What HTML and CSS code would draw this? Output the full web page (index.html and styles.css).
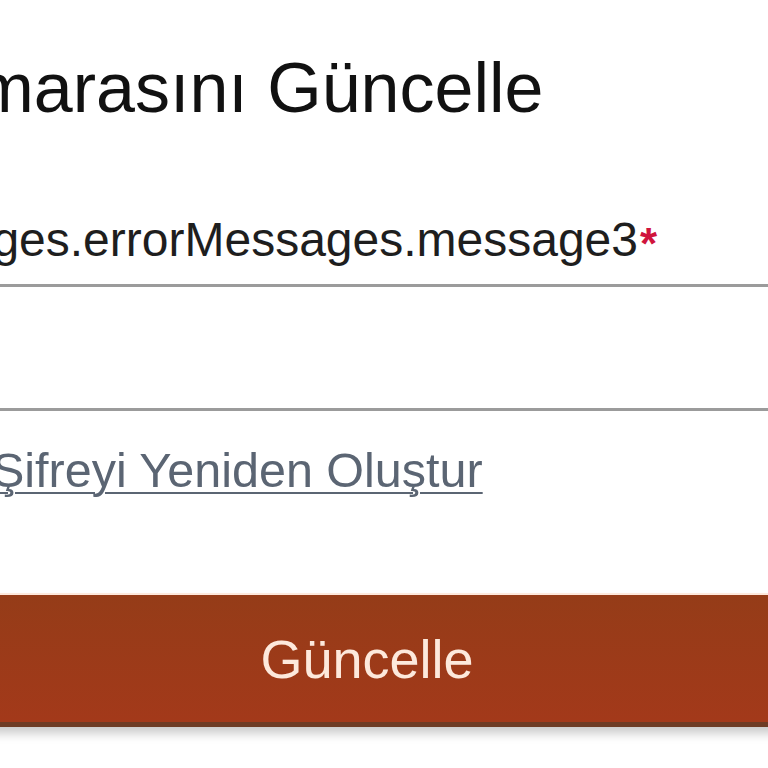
FILE: index.html
```html
<!DOCTYPE html>
<html lang="tr">
<head>
<meta charset="utf-8">
<title>Telefon Numarasını Güncelle</title>
<link rel="stylesheet" href="styles.css">
</head>
<body>
<main class="form">
  <h1 class="title">Numarasını Güncelle</h1>
  <label class="label" for="phone">messages.errorMessages.message3<span class="req">*</span></label>
  <input class="field" id="phone" type="text">
  <a class="link" href="#">Şifreyi Yeniden Oluştur</a>
  <button class="submit" type="button">Güncelle</button>
</main>
</body>
</html>
```
FILE: styles.css
```css
html, body {
  margin: 0;
  padding: 0;
  background: #ffffff;
  overflow: hidden;
}
body {
  width: 768px;
  height: 768px;
  font-family: "Liberation Sans", Arial, Helvetica, sans-serif;
}
.form {
  display: flex;
  flex-direction: column;
  align-items: flex-start;
  width: 1134px;
  margin-left: -200px;
  padding-left: 200px;
  box-sizing: border-box;
}
.title {
  margin: 46px 0 0 -114px;
  font-size: 70px;
  line-height: 84px;
  font-weight: 400;
  color: #111111;
}
.label {
  margin: 82px 0 0 -149px;
  font-size: 48px;
  line-height: 56px;
  height: 56px;
  color: #1e1e1e;
}
.req {
  color: #d0143c;
  font-size: 44px;
  font-weight: 700;
  line-height: 0;
  vertical-align: -3px;
  margin-left: 2px;
}
.field {
  align-self: stretch;
  margin: 16px 0 0 -200px;
  height: 127px;
  box-sizing: border-box;
  border: none;
  border-top: 3px solid #9b9b9b;
  border-bottom: 3px solid #9b9b9b;
  background: #ffffff;
  outline: none;
}
.link {
  margin: 31px 0 0 -8px;
  font-size: 48.5px;
  line-height: 56px;
  color: #5b6573;
  text-decoration: underline;
  text-decoration-thickness: 2px;
  text-underline-offset: 5px;
}
.submit {
  align-self: stretch;
  margin: 97px 0 0 -200px;
  height: 132px;
  box-sizing: border-box;
  border: none;
  border-bottom: 5px solid #6d3b24;
  background: linear-gradient(#953c18, #a3391a);
  color: #fde9dc;
  font-family: "Liberation Sans", Arial, Helvetica, sans-serif;
  font-size: 54px;
  box-shadow: 0 -2px 0 #fde8dc, 0 6px 10px rgba(0, 0, 0, 0.22);
  padding: 0;
}
```
